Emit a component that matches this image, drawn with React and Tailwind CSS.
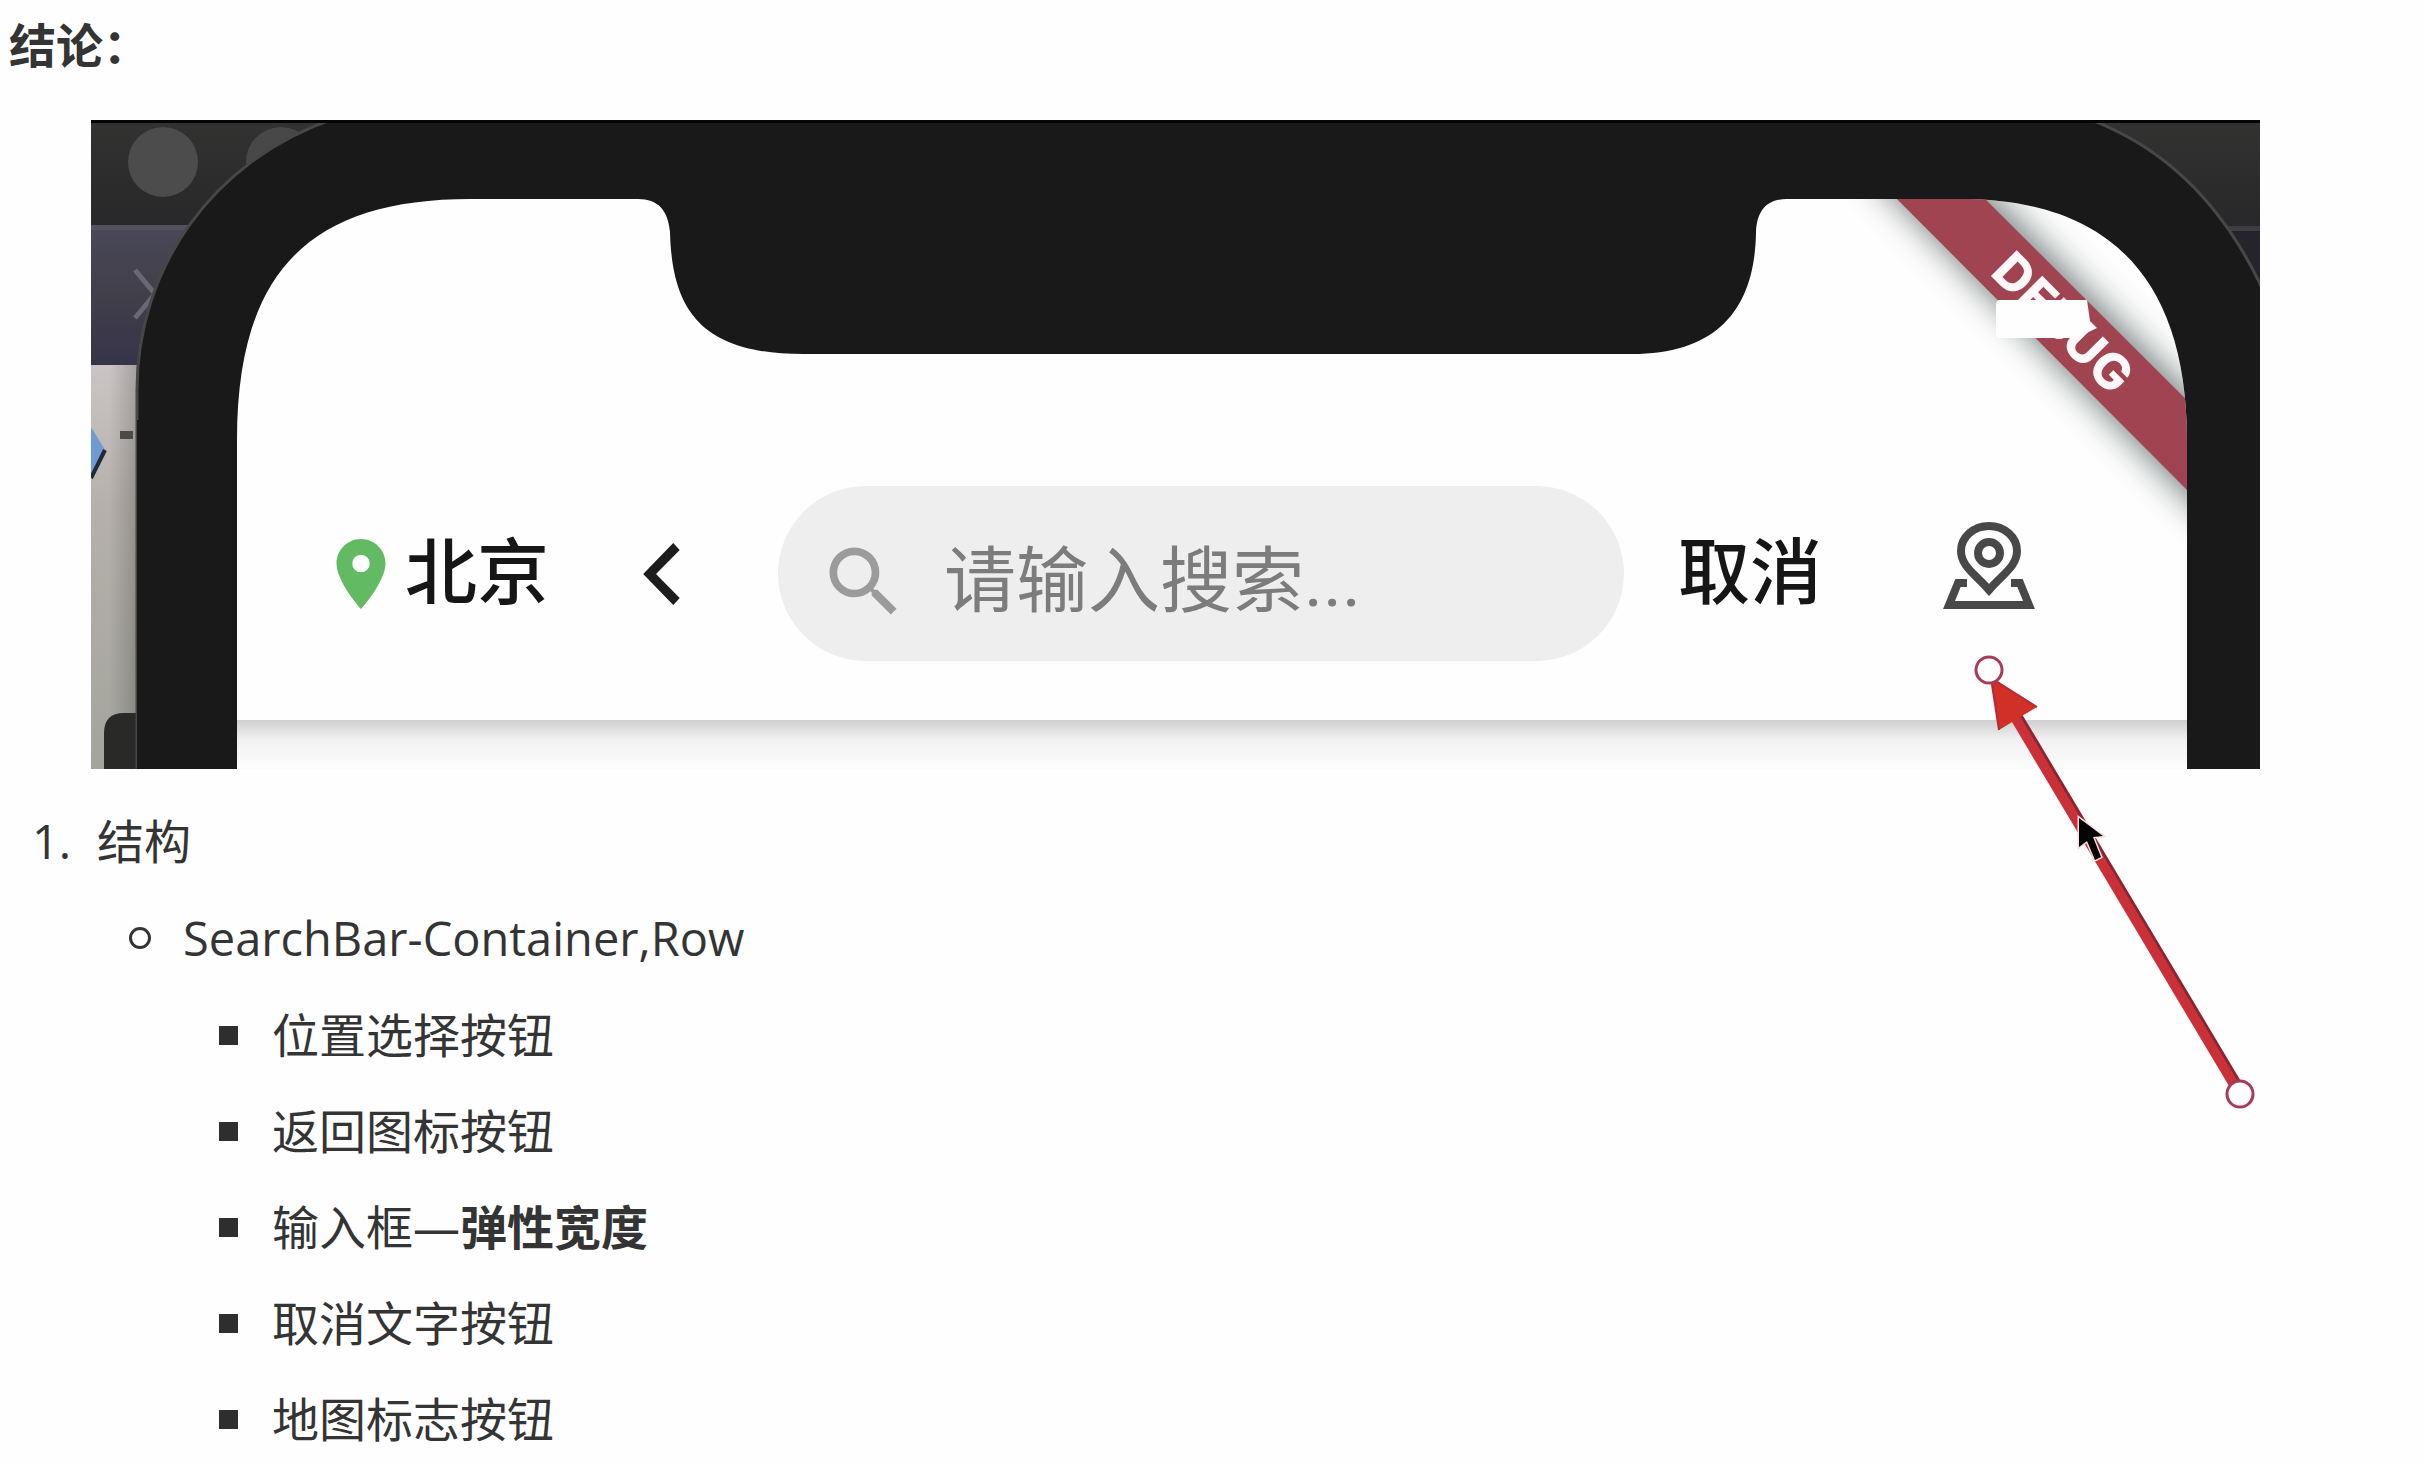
import React from "react";

function PhoneBackdrop() {
  return (
    <svg
      className="absolute inset-0 h-full w-full"
      viewBox="0 0 2169 649"
      preserveAspectRatio="none"
      aria-hidden="true"
    >
      <defs>
        <linearGradient id="toolbar" x1="0" y1="0" x2="0" y2="1">
          <stop offset="0" stopColor="#323231" />
          <stop offset="1" stopColor="#28282a" />
        </linearGradient>
        <linearGradient id="tab" x1="0" y1="0" x2="0" y2="1">
          <stop offset="0" stopColor="#494857" />
          <stop offset="0.5" stopColor="#413f4a" />
          <stop offset="1" stopColor="#363448" />
        </linearGradient>
        <linearGradient id="panel" x1="0" y1="0" x2="0" y2="1">
          <stop offset="0" stopColor="#cac5c4" />
          <stop offset="0.35" stopColor="#b5b0ab" />
          <stop offset="1" stopColor="#a3a49c" />
        </linearGradient>
        <linearGradient id="panelShade" x1="0" y1="0" x2="1" y2="0">
          <stop offset="0.4" stopColor="#000" stopOpacity="0" />
          <stop offset="1" stopColor="#000" stopOpacity="0.18" />
        </linearGradient>
        <clipPath id="screen">
          <path d="M146 649V320C146 150 220 79 380 79H547C567 79 577 90 579 112C581 190 610 234 712 234H1541C1630 234 1664 185 1665 112C1666 90 1676 79 1696 79H1870C2010 79 2096 150 2096 320V649Z" />
        </clipPath>
        <filter id="soft" x="-20%" y="-20%" width="140%" height="140%">
          <feGaussianBlur stdDeviation="17" />
        </filter>
      </defs>

      <rect width="2169" height="106" fill="url(#toolbar)" />
      <circle cx="72" cy="42" r="35" fill="#4c4c4c" />
      <circle cx="190" cy="42" r="35" fill="#484848" />
      <rect y="106" width="120" height="139" fill="url(#tab)" />
      <rect y="105" width="120" height="5" fill="#545261" />
      <path d="M44 150L64 174L44 198" fill="none" stroke="#6a6874" strokeWidth="5" />
      <rect y="245" width="60" height="404" fill="url(#panel)" />
      <rect y="245" width="46" height="404" fill="url(#panelShade)" />
      <path d="M0 307L14 330L0 358Z" fill="#6e9bd2" />
      <path d="M14 330L0 358" stroke="#222a38" strokeWidth="4" />
      <rect x="29" y="311" width="13" height="8" fill="#4a4c42" />
      <path d="M13 649V613Q13 593 33 593H60V649Z" fill="#292927" />
      <rect x="2080" y="106" width="89" height="100" fill="#26242b" />
      <rect x="2080" y="106" width="89" height="5" fill="#3f3d42" />

      <path
        d="M46 655V270C46 150 120 40 245 -2H1995C2070 25 2130 80 2172 170V655Z"
        fill="#191919"
        stroke="#474748"
        strokeWidth="3"
      />
      <rect x="46" y="300" width="2123" height="349" fill="#191919" />
      <rect width="2169" height="3" fill="#050505" />

      <g clipPath="url(#screen)">
        <rect x="140" y="70" width="1960" height="579" fill="#fefefe" />
        <path
          d="M1770 43L1868 43L2140 315V421Z"
          fill="#5c6866"
          opacity="0.85"
          filter="url(#soft)"
        />
        <path d="M1776 49H1864L2136 320V410Z" fill="#9f4450" />
        <text
          x="1898"
          y="154"
          transform="rotate(45 1898 154)"
          fill="#fff8f8"
          fontSize="50"
          fontWeight="800"
          fontFamily="Inter, sans-serif"
        >
          DEBUG
        </text>
        <path d="M1909 180H1996L1999 201L2006 208L1985 218H1909Q1905 218 1905 213V185Q1905 180 1909 180Z" fill="#fefefe" />
      </g>
    </svg>
  );
}

function PinIcon() {
  return (
    <svg className="size-[84px] shrink-0" viewBox="0 0 24 24" fill="#62bb62" aria-hidden="true">
      <path d="M12 2C8.13 2 5 5.13 5 9c0 5.25 7 13 7 13s7-7.75 7-13c0-3.87-3.13-7-7-7zm0 9.5a2.5 2.5 0 0 1 0-5 2.5 2.5 0 0 1 0 5z" />
    </svg>
  );
}

function BackIcon() {
  return (
    <svg className="h-[62px] w-[37px]" viewBox="0 2.1 11.7 19.8" fill="#1c1c1c" aria-hidden="true">
      <path d="M11.67 4.3L9.6 2.1 0 12l9.6 9.9 2.07-2.2L4.1 12z" />
    </svg>
  );
}

function SearchIcon() {
  return (
    <svg className="size-[92px] shrink-0" viewBox="0 0 24 24" fill="#9b9b9b" aria-hidden="true">
      <path d="M15.5 14h-.79l-.28-.27A6.471 6.471 0 0 0 16 9.5 6.5 6.5 0 1 0 9.5 16c1.61 0 3.09-.59 4.23-1.57l.27.28v.79l5 4.99L20.49 19l-4.99-5zm-6 0C7.01 14 5 11.99 5 9.5S7.01 5 9.5 5 14 7.01 14 9.5 11.99 14 9.5 14z" />
    </svg>
  );
}

function MapIcon() {
  return (
    <svg
      className="h-[87px] w-[92px]"
      viewBox="0 0 92 87"
      fill="none"
      stroke="#484848"
      strokeWidth="8"
      aria-hidden="true"
    >
      <path d="M46 68C32 52 18 44 18 29A28 25 0 1 1 74 29C74 44 60 52 46 68Z" />
      <circle cx="46" cy="31" r="11" />
      <path d="M24 61H15L6 83H86L77 61H68" />
    </svg>
  );
}

function PointerArrow() {
  return (
    <svg
      className="pointer-events-none absolute right-0 top-[530px] h-[460px] w-[300px]"
      viewBox="0 0 300 460"
      aria-hidden="true"
    >
      <path d="M52 58L278 437" stroke="#8a2430" strokeWidth="11" />
      <path d="M50 59L276 438" stroke="#c93038" strokeWidth="10" />
      <path d="M31 28L77 57L39 80Z" fill="#d03026" />
      <path d="M39 80L31 28L77 57" fill="none" stroke="#b52a38" strokeWidth="2" />
      <circle cx="29" cy="20" r="13" fill="#fefefe" stroke="#a83a55" strokeWidth="3" />
      <circle cx="280" cy="444" r="13" fill="#fefefe" stroke="#a83a55" strokeWidth="3" />
      <path
        d="M119 168V197L127 191L135 210L141 207L133 187L143 186Z"
        fill="#050505"
        stroke="#f6dfe0"
        strokeWidth="3"
        paintOrder="stroke"
      />
    </svg>
  );
}

function SearchBar() {
  return (
    <div className="flex items-center text-[72px] leading-[84px] font-medium text-[#161616]">
      <button type="button" className="flex shrink-0 items-center gap-0.5">
        <PinIcon />
        北京
      </button>
      <button type="button" aria-label="返回" className="ml-[94px] shrink-0">
        <BackIcon />
      </button>
      <label className="ml-[98px] flex h-[175px] min-w-0 flex-1 items-center rounded-full bg-[#eeeeee] pt-4 pr-16 pl-10">
        <SearchIcon />
        <input
          type="text"
          aria-label="搜索"
          placeholder="请输入搜索..."
          className="ml-[34px] min-w-0 flex-1 bg-transparent font-normal outline-none placeholder:text-[#7c7c7c]"
        />
      </label>
      <button type="button" className="ml-[54px] shrink-0">
        取消
      </button>
      <button type="button" aria-label="地图" className="ml-[121px] shrink-0 pb-4">
        <MapIcon />
      </button>
    </div>
  );
}

const parts = [
  { text: "位置选择按钮" },
  { text: "返回图标按钮" },
  { text: "输入框—", strong: "弹性宽度" },
  { text: "取消文字按钮" },
  { text: "地图标志按钮" },
];

export default function App() {
  return (
    <main className="min-h-screen bg-[#fefefe] pt-[7px] pb-[10px] font-['Open_Sans','Noto_Sans_CJK_SC',sans-serif] text-[47px] leading-[72px] text-[#343434]">
      <h1 className="pl-[9px] font-['Noto_Sans_CJK_SC',sans-serif] font-bold">结论：</h1>

      <figure className="relative mt-[41px] mr-[162px] ml-[91px]">
        <PhoneBackdrop />
        <div className="relative mr-[73px] ml-[146px] font-[Roboto,'Noto_Sans_CJK_SC',sans-serif]">
          <div className="pt-[366px] pr-[152px] pb-[59px] pl-[82px]">
            <SearchBar />
          </div>
          <div className="h-[49px] bg-linear-to-b from-[#cfcfcf] via-[#f1f1f1] via-40% to-[#fcfcfc]" />
        </div>
        <PointerArrow />
      </figure>

      <ol className="mt-[36px] pl-8">
        <li>
          <div className="flex">
            <span className="w-[65px]">1.</span>
            <span>结构</span>
          </div>
          <ul className="mt-[25px] pl-[97px]">
            <li>
              <div className="flex items-center">
                <span className="mr-8 size-[22px] rounded-full border-3 border-[#343434]" />
                <span>SearchBar-Container,Row</span>
              </div>
              <ul className="mt-[25px] flex flex-col gap-6 pl-[90px]">
                {parts.map((part) => (
                  <li key={part.text} className="flex items-center">
                    <span className="mr-[34px] size-[19px] bg-[#2e2e2e]" />
                    <span>
                      {part.text}
                      {part.strong && <strong className="font-bold">{part.strong}</strong>}
                    </span>
                  </li>
                ))}
              </ul>
            </li>
          </ul>
        </li>
      </ol>
    </main>
  );
}
